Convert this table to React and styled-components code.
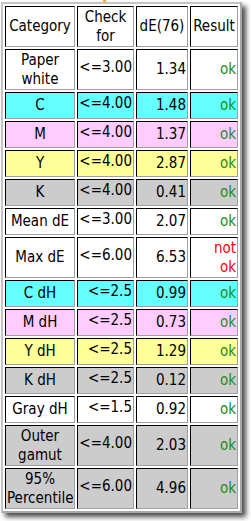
import React from 'react';
import styled, { createGlobalStyle } from 'styled-components';

const Global = createGlobalStyle`
  html, body { margin: 0; padding: 0; background: #fff; }
  *, *::before, *::after { box-sizing: border-box; }
`;

const Page = styled.div`
  width: 251px;
  height: 521px;
  overflow: hidden;
  background: #fff;
  padding-left: 1px;
`;

const Caption = styled.div`
  height: 2px;
  overflow: hidden;
  padding-left: 64px;
  font: bold 15px "DejaVu Sans", sans-serif;
  color: #f0a030;
  white-space: nowrap;
`;

const CaptionText = styled.div`
  line-height: 15px;
  margin-top: -13.5px;
`;

const Frame = styled.div`
  width: 241px;
  border: 2px solid;
  border-color: #c4c4c4 #a8a8a8 #a8a8a8 #c4c4c4;
  box-shadow: 4px 4px 5px rgba(0, 0, 0, 0.7);
  background: #fff;
`;

const Table = styled.table`
  border-collapse: separate;
  border-spacing: 2px;
  table-layout: fixed;
  width: 237px;
  font-family: "DejaVu Sans Condensed", "DejaVu Sans", sans-serif;
  font-stretch: condensed;
  font-size: 15px;
  line-height: 18.5px;
  color: #000;
`;

const Col = styled.col`
  width: ${p => p.$w}px;
`;

const Cell = styled.td`
  padding: 1px;
  padding-bottom: ${p => (p.$raised ? '5.5px' : '1px')};
  border: 1px solid;
  border-color: #000 #a0a0a0 #a0a0a0 #000;
  background: ${p => p.$bg || '#fff'};
  text-align: ${p => p.$align || 'center'};
  vertical-align: middle;
  white-space: nowrap;
  overflow: visible;
  color: ${p => p.$color || '#000'};
`;

const HeadCell = styled.th`
  padding: 1px;
  border: 1px solid;
  border-color: #000 #a0a0a0 #a0a0a0 #000;
  background: #fff;
  font-weight: normal;
  text-align: center;
  vertical-align: middle;
  white-space: nowrap;
`;

const BG = {
  w: '#ffffff',
  c: '#66ffff',
  m: '#ffccff',
  y: '#ffff99',
  k: '#cccccc',
};

const rows = [
  { cat: ['Paper', 'white'], check: '<=3.00', de: '1.34', bg: 'w' },
  { cat: ['C'], check: '<=4.00', de: '1.48', bg: 'c' },
  { cat: ['M'], check: '<=4.00', de: '1.37', bg: 'm' },
  { cat: ['Y'], check: '<=4.00', de: '2.87', bg: 'y' },
  { cat: ['K'], check: '<=4.00', de: '0.41', bg: 'k' },
  { cat: ['Mean dE'], check: '<=3.00', de: '2.07', bg: 'w' },
  { cat: ['Max dE'], check: '<=6.00', de: '6.53', bg: 'w', fail: true },
  { cat: ['C dH'], check: '<=2.5', de: '0.99', bg: 'c' },
  { cat: ['M dH'], check: '<=2.5', de: '0.73', bg: 'm' },
  { cat: ['Y dH'], check: '<=2.5', de: '1.29', bg: 'y' },
  { cat: ['K dH'], check: '<=2.5', de: '0.12', bg: 'k' },
  { cat: ['Gray dH'], check: '<=1.5', de: '0.92', bg: 'w' },
  { cat: ['Outer', 'gamut'], check: '<=4.00', de: '2.03', bg: 'k' },
  { cat: ['95%', 'Percentile'], check: '<=6.00', de: '4.96', bg: 'k' },
];

const Lines = ({ parts }) =>
  parts.map((t, i) => (
    <React.Fragment key={i}>
      {i > 0 && <br />}
      {t}
    </React.Fragment>
  ));

export default function App() {
  return (
    <Page>
      <Global />
      <Caption>
        <CaptionText>Comparison Results</CaptionText>
      </Caption>
      <Frame>
        <Table>
          <colgroup>
            <Col $w={70} />
            <Col $w={57} />
            <Col $w={52} />
            <Col $w={48} />
          </colgroup>
          <thead>
            <tr>
              <HeadCell>Category</HeadCell>
              <HeadCell>Check<br />for</HeadCell>
              <HeadCell>dE(76)</HeadCell>
              <HeadCell>Result</HeadCell>
            </tr>
          </thead>
          <tbody>
            {rows.map((r, i) => (
              <tr key={i}>
                <Cell $bg={BG[r.bg]}><Lines parts={r.cat} /></Cell>
                <Cell $bg={BG[r.bg]} $align="right" $raised>{r.check}</Cell>
                <Cell $bg={BG[r.bg]} $align="right">{r.de}</Cell>
                <Cell $bg={BG[r.bg]} $align="right" $color={r.fail ? '#ff0000' : '#1a8c1a'}>
                  {r.fail ? <>not<br />ok</> : 'ok'}
                </Cell>
              </tr>
            ))}
          </tbody>
        </Table>
      </Frame>
    </Page>
  );
}
